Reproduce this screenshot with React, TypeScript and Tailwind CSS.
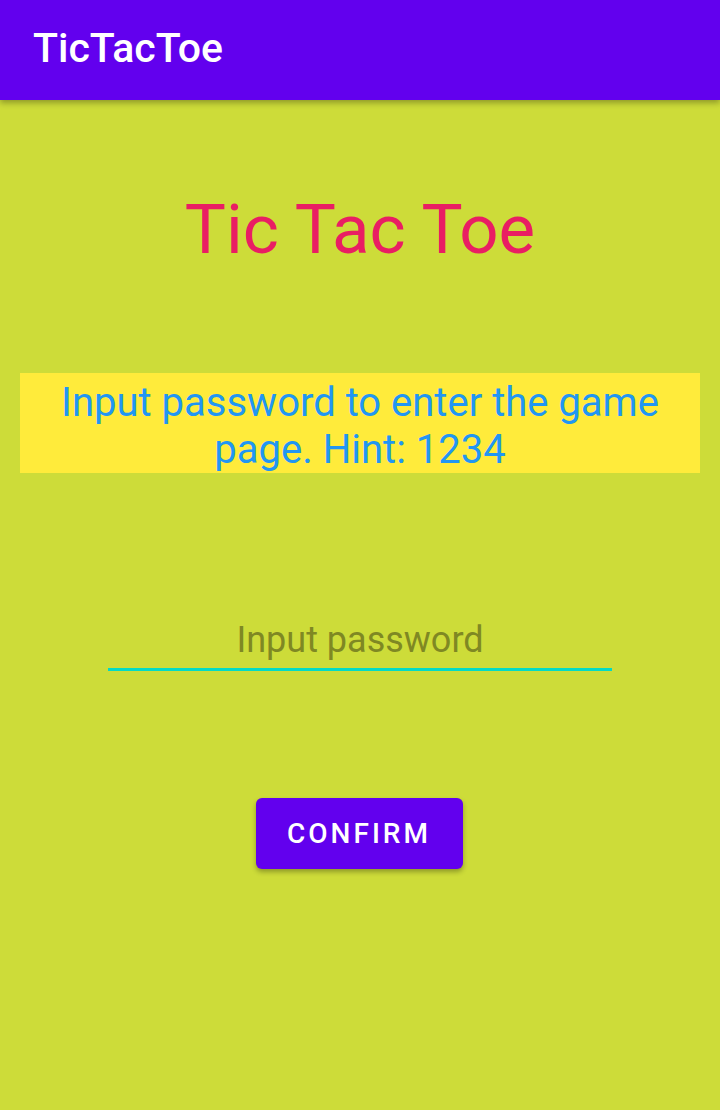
export default function App() {
  return (
    <div
      className="w-[720px] h-[1110px] bg-[#cddc39] flex flex-col overflow-hidden"
      style={{ fontFamily: "Roboto, 'Liberation Sans', sans-serif" }}
    >
      <header className="h-[100px] shrink-0 bg-[#6200ee] flex items-center px-[33px] shadow-[0_3px_6px_rgba(0,0,0,0.3)] z-10">
        <h1 className="text-white text-[41px] font-medium leading-none -mt-[4px]">TicTacToe</h1>
      </header>

      <main className="flex flex-col items-center">
        <h2 className="mt-[95px] text-[#e91e63] text-[69px] leading-none">Tic Tac Toe</h2>

        <div className="mt-[109px] w-[680px] h-[100px] bg-[#ffeb3b] flex items-center justify-center px-[30px] pt-[6px]">
          <p className="text-[#2196f3] text-[40px] leading-[47px] text-center">
            Input password to enter the game page. Hint: 1234
          </p>
        </div>

        <input
          type="password"
          placeholder="Input password"
          className="mt-[142px] w-[504px] h-[56px] bg-transparent text-center text-[36px] text-black placeholder:text-[#7f8823] border-b-[3px] border-[#03dac5] outline-none pb-[4px]"
        />

        <button className="mt-[127px] w-[207px] h-[71px] rounded-[6px] bg-[#6200ee] text-white text-[28px] font-medium tracking-[3px] shadow-[0_3px_5px_rgba(0,0,0,0.3)] -translate-x-px">
          CONFIRM
        </button>
      </main>
    </div>
  );
}
